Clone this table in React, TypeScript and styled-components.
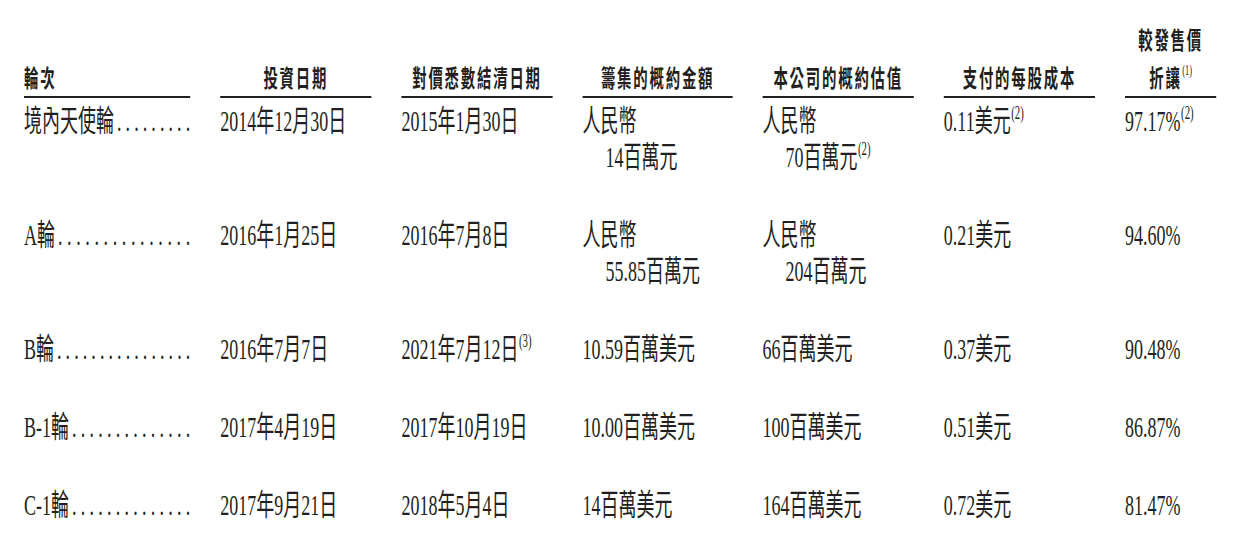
import styled, { createGlobalStyle } from 'styled-components';

// the source typesetting is a condensed serif; the whole table is laid out wide
// and squeezed horizontally once, so every column keeps natural flow layout
const SQUEEZE = 0.6;
const columns = '277px 252px 252px 250px 252px 252px 152px';
const FIRST_COL = 277;
const DOT = 7.5; // advance of "." at 30px
const DOT_PITCH = 14.3;
const LEADER_GAP = 5;

const GlobalStyle = createGlobalStyle`
  html, body {
    margin: 0;
    padding: 0;
    background: #fff;
    overflow: hidden;
  }
  body {
    font-family: "Liberation Serif", "Noto Sans CJK TC", serif;
    color: #231f20;
  }
`;

const Page = styled.div`
  width: ${Math.round(1242 / SQUEEZE)}px;
  box-sizing: border-box;
  padding: 20px 0 0 40px;
  transform: scaleX(${SQUEEZE});
  transform-origin: 0 0;
`;

const HeaderRow = styled.div`
  display: grid;
  grid-template-columns: ${columns};
  column-gap: 50px;
  align-items: end;
`;

const HeadCell = styled.div<{ $left?: boolean }>`
  font-family: "Noto Sans CJK TC", sans-serif;
  font-weight: 700;
  font-size: 24px;
  letter-spacing: 3px;
  line-height: 38px;
  text-align: ${p => (p.$left ? 'left' : 'center')};
  border-bottom: 2px solid #231f20;
  white-space: nowrap;
`;

const Body = styled.div`
  display: flex;
  flex-direction: column;
  gap: 42px;
  padding-top: 5px;
`;

const Row = styled.div`
  display: grid;
  grid-template-columns: ${columns};
  column-gap: 50px;
  align-items: start;
`;

const Cell = styled.div`
  font-size: 30px;
  line-height: 36px;
  white-space: nowrap;
`;

const RoundCell = styled(Cell)`
  display: flex;
`;

const Leader = styled.span`
  flex: none;
  margin-left: ${LEADER_GAP}px;
`;

const Line = styled.div<{ $indent?: boolean }>`
  padding-left: ${p => (p.$indent ? '38px' : '0')};
`;

const Note = styled.span<{ $small?: boolean }>`
  font-family: "Liberation Serif", serif;
  font-weight: 400;
  font-size: ${p => (p.$small ? '14px' : '18px')};
  letter-spacing: 0;
  vertical-align: 12px;
  line-height: 0;
  margin-left: 1px;
`;

type Value = { lines: string[]; note?: string };

type Round = {
  name: string;
  invested: Value;
  settled: Value;
  raised: Value;
  valuation: Value;
  cost: Value;
  discount: Value;
};

const v = (text: string | string[], note?: string): Value => ({
  lines: Array.isArray(text) ? text : [text],
  note,
});

const rounds: Round[] = [
  {
    name: '境內天使輪',
    invested: v('2014年12月30日'),
    settled: v('2015年1月30日'),
    raised: v(['人民幣', '14百萬元']),
    valuation: v(['人民幣', '70百萬元'], '(2)'),
    cost: v('0.11美元', '(2)'),
    discount: v('97.17%', '(2)'),
  },
  {
    name: 'A輪',
    invested: v('2016年1月25日'),
    settled: v('2016年7月8日'),
    raised: v(['人民幣', '55.85百萬元']),
    valuation: v(['人民幣', '204百萬元']),
    cost: v('0.21美元'),
    discount: v('94.60%'),
  },
  {
    name: 'B輪',
    invested: v('2016年7月7日'),
    settled: v('2021年7月12日', '(3)'),
    raised: v('10.59百萬美元'),
    valuation: v('66百萬美元'),
    cost: v('0.37美元'),
    discount: v('90.48%'),
  },
  {
    name: 'B-1輪',
    invested: v('2017年4月19日'),
    settled: v('2017年10月19日'),
    raised: v('10.00百萬美元'),
    valuation: v('100百萬美元'),
    cost: v('0.51美元'),
    discount: v('86.87%'),
  },
  {
    name: 'C-1輪',
    invested: v('2017年9月21日'),
    settled: v('2018年5月4日'),
    raised: v('14百萬美元'),
    valuation: v('164百萬美元'),
    cost: v('0.72美元'),
    discount: v('81.47%'),
  },
];

// rough advance widths at 30px, enough to size the dot leader
const glyphWidth: Record<string, number> = { A: 21.7, B: 20, C: 20, '-': 10, '1': 15 };
const labelWidth = (s: string) =>
  [...s].reduce((w, ch) => w + (glyphWidth[ch] ?? 30), 0);

// dots spread so that the last one lands on the column edge
const leader = (s: string) => {
  const avail = FIRST_COL - labelWidth(s) - LEADER_GAP;
  const n = Math.max(2, Math.round(avail / DOT_PITCH));
  const spacing = (avail - DOT * n) / (n - 1);
  return { dots: '.'.repeat(n), spacing };
};

const ValueCell = ({ value }: { value: Value }) => (
  <Cell>
    {value.lines.map((line, i) => (
      <Line key={i} $indent={i > 0}>
        {line}
        {i === value.lines.length - 1 && value.note && <Note>{value.note}</Note>}
      </Line>
    ))}
  </Cell>
);

export default function App() {
  return (
    <>
      <GlobalStyle />
      <Page>
        <HeaderRow>
          <HeadCell $left>輪次</HeadCell>
          <HeadCell>投資日期</HeadCell>
          <HeadCell>對價悉數結清日期</HeadCell>
          <HeadCell>籌集的概約金額</HeadCell>
          <HeadCell>本公司的概約估值</HeadCell>
          <HeadCell>支付的每股成本</HeadCell>
          <HeadCell>
            較發售價
            <br />
            折讓<Note $small>(1)</Note>
          </HeadCell>
        </HeaderRow>
        <Body>
          {rounds.map(r => {
            const { dots, spacing } = leader(r.name);
            return (
              <Row key={r.name}>
                <RoundCell>
                  <span>{r.name}</span>
                  <Leader style={{ letterSpacing: `${spacing}px`, marginRight: `${-spacing}px` }}>
                    {dots}
                  </Leader>
                </RoundCell>
                <ValueCell value={r.invested} />
                <ValueCell value={r.settled} />
                <ValueCell value={r.raised} />
                <ValueCell value={r.valuation} />
                <ValueCell value={r.cost} />
                <ValueCell value={r.discount} />
              </Row>
            );
          })}
        </Body>
      </Page>
    </>
  );
}
